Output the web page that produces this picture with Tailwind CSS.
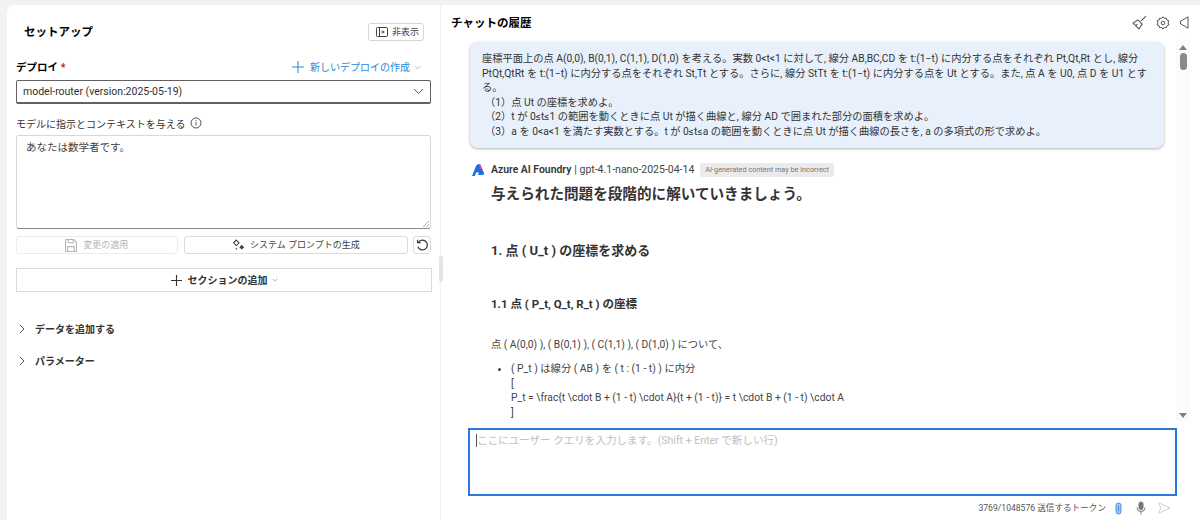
<!DOCTYPE html>
<html lang="ja">
<head>
  <meta charset="UTF-8">
  <title>セットアップ</title>
  <script src="https://cdn.jsdelivr.net/npm/@tailwindcss/browser@4"></script>
</head>
<body class="w-[1200px] h-[520px] overflow-hidden bg-[#f2f2f2] text-[#242424] font-['Roboto','Noto_Sans_CJK_JP',sans-serif]">
  <div class="flex h-[520px] pt-[5px] pl-[7px]">

    <!-- setup panel -->
    <aside class="relative w-[433px] shrink-0 bg-white rounded-tl-lg px-[9px]">
      <div class="flex items-center justify-between h-[18px] mt-[18px] pl-2 pr-[7px]">
        <h2 class="pt-[2px] text-[11.5px] font-bold text-black">セットアップ</h2>
        <button class="flex items-center gap-[4px] w-[56px] h-[18px] pl-[7px] border border-[#d6d6d6] rounded-[3px] text-[9px] text-[#424242]">
          <svg width="12" height="10" viewBox="0 0 12 10" fill="none" stroke="#424242"><rect x="0.5" y="0.5" width="11" height="9" rx="1"/><path d="M3.5 1v8M5.5 5h3M7 3.5v3"/></svg>
          <span class="pt-[1px]">非表示</span>
        </button>
      </div>

      <div class="flex items-center justify-between h-[16px] mt-[18px]">
        <label class="pt-[2px] text-[10.5px] font-bold text-black">デプロイ <span class="text-[#c50f1f]">*</span></label>
        <div class="flex items-center gap-[6px] pr-[10px] text-[#2b88d8] text-[10px]">
          <svg width="12" height="12" viewBox="0 0 12 12" stroke="#2b88d8" stroke-width="1"><path d="M6 0v12M0 6h12"/></svg>
          <span>新しいデプロイの作成</span>
          <svg class="-ml-[2px]" width="7" height="7" viewBox="0 0 8 8" fill="none" stroke="#8ab8e0"><path d="M1 2.5l3 3 3-3"/></svg>
        </div>
      </div>
      <div class="flex items-center justify-between h-[24px] mt-[5px] pl-[6px] pr-[6px] border border-[#616161] border-b-2 rounded-[2px] text-[10.5px]">
        <span class="text-[#303030]">model-router (version:2025-05-19)</span>
        <svg width="11" height="7" viewBox="0 0 11 7" fill="none" stroke="#555"><path d="M1 1l4.5 4.5L10 1"/></svg>
      </div>

      <div class="flex items-center gap-[5px] h-[16px] mt-[11px] text-[10px] text-[#333]">
        <span class="pt-[2px]">モデルに指示とコンテキストを与える</span>
        <svg width="12" height="12" viewBox="0 0 12 12" fill="none" stroke="#555"><circle cx="6" cy="6" r="5"/><path d="M6 5.2v3.2M6 3.2v1"/></svg>
      </div>
      <div class="relative h-[94px] mt-[4px] px-[9px] pt-[4px] border border-[#d8d8d8] border-b-[#8a8a8a] rounded-[3px] text-[10.5px] text-[#444]">
        あなたは数学者です。
        <svg class="absolute right-[1px] bottom-[1px]" width="6" height="6" viewBox="0 0 6 6" stroke="#888" stroke-width="0.7"><path d="M0 6L6 0M3 6l3-3"/></svg>
      </div>

      <div class="flex gap-[6px] h-[18px] mt-[7px] text-[9px]">
        <button class="flex items-center justify-center gap-[6px] w-[162px] border border-[#ececec] rounded-[3px] text-[#b5b5b5]">
          <svg width="12" height="13" viewBox="0 0 11 12" fill="none" stroke="#b5b5b5"><path d="M1 .5h7l2.5 2.5v8.500H.5V1z"/><path d="M3 .5v3h4.500v-3M2.500 11.500V7h6v4.500"/></svg>
          <span class="pt-[1px]">変更の適用</span>
        </button>
        <button class="flex items-center justify-center gap-[5px] w-[225px] border border-[#dcdcdc] rounded-[3px] text-[#424242]">
          <svg width="13" height="12" viewBox="0 0 12 11" fill="none" stroke="#424242"><path d="M4 1l2.500 2.500L4 6 1.500 3.500z"/><path d="M9 6l1.500 1.500L9 9 7.500 7.500z" fill="#424242"/><path d="M3.500 8.500l1 1"/></svg>
          <span class="pt-[1px]">システム プロンプトの生成</span>
        </button>
        <button class="flex items-center justify-center w-[18px] border border-[#dcdcdc] rounded-[3px] -ml-[1px]">
          <svg width="13" height="13" viewBox="0 0 12 12" fill="none" stroke="#333" stroke-width="1.100"><path d="M2.600 2.600A4.500 4.500 0 1 1 1.700 7"/><path d="M1.500 .8v2.600h2.800"/></svg>
        </button>
      </div>

      <button class="flex items-center justify-center gap-[6px] w-[416px] h-[24px] mt-[14px] border border-[#dcdcdc] text-[10px] font-bold text-[#333]">
        <svg width="11" height="11" viewBox="0 0 11 11" stroke="#333" stroke-width="1.100"><path d="M5.500 0v11M0 5.500h11"/></svg>
        <span>セクションの追加</span>
        <svg class="-ml-[2px]" width="6" height="6" viewBox="0 0 8 8" fill="none" stroke="#999"><path d="M1 2.500l3 3 3-3"/></svg>
      </button>

      <div class="flex items-center gap-[10px] h-[16px] mt-[29px] pl-[3px] text-[10px] font-bold text-[#333]">
        <svg width="6" height="10" viewBox="0 0 6 10" fill="none" stroke="#555"><path d="M1 1l4 4-4 4"/></svg>
        データを追加する
      </div>
      <div class="flex items-center gap-[10px] h-[16px] mt-[16px] pl-[3px] text-[10px] font-bold text-[#333]">
        <svg width="6" height="10" viewBox="0 0 6 10" fill="none" stroke="#555"><path d="M1 1l4 4-4 4"/></svg>
        パラメーター
      </div>

      <div class="absolute -right-[3px] top-[251px] w-[4px] h-[26px] bg-[#e4e4e4] rounded-sm z-10"></div>
    </aside>

    <!-- chat panel -->
    <main class="flex flex-col w-[759px] ml-[1px] shrink-0 bg-white">
      <div class="flex items-center justify-between h-[34px] pl-[10px] pr-[11px] pt-[1px]">
        <h2 class="pt-[2px] text-[11.500px] font-bold text-black">チャットの履歴</h2>
        <div class="flex items-center gap-[9px]">
          <svg width="15" height="15" viewBox="0 0 14 14" fill="none" stroke="#555"><path d="M13 1L8.500 5.500M5.500 4.500l4 4-3 4.500L1 7.500z"/><path d="M3.500 10l1.500-1.500"/></svg>
          <svg width="14" height="14" viewBox="0 0 14 14" fill="none" stroke="#555"><path d="M7 .8l1.300 1.600 2-.4.600 2 1.900.8-.7 2.200.7 2-1.900.8-.6 2-2-.4L7 13.200l-1.300-1.800-2 .4-.6-2-1.900-.8.700-2-.7-2.200 1.900-.8.600-2 2 .4z"/><circle cx="7" cy="7" r="1.800"/></svg>
          <svg class="ml-[1px]" width="9" height="13" viewBox="0 0 9 13" fill="none" stroke="#555"><path d="M8 .8v11.400L1 8H.5V5H1z"/></svg>
        </div>
      </div>

      <div class="flex h-[382px] min-h-0">
        <!-- messages -->
        <div class="w-[735px] overflow-hidden pt-[3px] pl-[29px]">
          <div class="w-[694px] h-[106px] pl-[12px] pt-[10px] bg-[#e8f1fb] rounded-lg shadow-[0_1px_3px_rgba(0,0,0,0.3)] text-[10.250px] leading-[14.600px] text-[#333] whitespace-nowrap">
            座標平面上の点 A(0,0), B(0,1), C(1,1), D(1,0) を考える。実数 0&lt;t&lt;1 に対して, 線分 AB,BC,CD を t:(1−t) に内分する点をそれぞれ Pt,Qt,Rt とし, 線分<br>
            PtQt,QtRt を t:(1−t) に内分する点をそれぞれ St,Tt とする。さらに, 線分 StTt を t:(1−t) に内分する点を Ut とする。また, 点 A を U0, 点 D を U1 とす<br>
            る。<br>
            <span class="pl-[3px]">（1）点 Ut の座標を求めよ。</span><br>
            <span class="pl-[3px]">（2）t が 0≤t≤1 の範囲を動くときに点 Ut が描く曲線と, 線分 AD で囲まれた部分の面積を求めよ。</span><br>
            <span class="pl-[3px]">（3）a を 0&lt;a&lt;1 を満たす実数とする。t が 0≤t≤a の範囲を動くときに点 Ut が描く曲線の長さを, a の多項式の形で求めよ。</span>
          </div>

          <div class="flex items-center h-[16px] mt-[14px] pl-[2px]">
            <svg width="12" height="13" viewBox="0 0 12 13"><path d="M0 12L4 2Q5 0 7 0H8L12 9Q12.500 11 10 11H6L7 8.500H4L3 12z" fill="#1d6fe0"/><path d="M6.500 0H8L11 6.500 8.500 5z" fill="#e0409c"/></svg>
            <span class="ml-[7px] text-[10.400px] font-semibold text-[#333]">Azure AI Foundry</span>
            <span class="ml-[3px] text-[10.500px] text-[#444]">| gpt-4.1-nano-2025-04-14</span>
            <span class="ml-[6px] px-[5px] h-[14px] leading-[14px] bg-[#ebebeb] rounded-[2px] text-[7.300px] text-[#777]">AI-generated content may be incorrect</span>
          </div>

          <div class="pl-[21px] text-[#333]">
            <h1 class="mt-[5px] h-[22px] text-[14.600px] leading-[22px] font-bold">与えられた問題を段階的に解いていきましょう。</h1>
            <h2 class="mt-[36px] h-[20px] text-[13px] leading-[20px] font-bold">1. 点 ( U_t ) の座標を求める</h2>
            <h3 class="mt-[35px] h-[16px] text-[11.500px] leading-[16px] font-bold">1.1 点 ( P_t, Q_t, R_t ) の座標</h3>
            <p class="mt-[25px] h-[16px] text-[10.250px] leading-[16px] text-[#444]">点 ( A(0,0) ), ( B(0,1) ), ( C(1,1) ), ( D(1,0) ) について、</p>
            <ul class="mt-[9px] ml-[20px] list-disc text-[10.300px] leading-[14.700px] text-[#444]">
              <li>( P_t ) は線分 ( AB ) を ( t : (1 - t) ) に内分<br>[<br>P_t = \frac{t \cdot B + (1 - t) \cdot A}{t + (1 - t)} = t \cdot B + (1 - t) \cdot A<br>]</li>
            </ul>
          </div>
        </div>

        <!-- scrollbar -->
        <div class="flex flex-col items-center justify-between w-[14px] h-[382px] pt-[6px] pb-[3px] bg-[#fbfbfb]">
          <div class="flex flex-col items-center gap-[3px]">
            <div class="w-0 h-0 border-x-[4px] border-x-transparent border-b-[5px] border-b-[#808080]"></div>
            <div class="w-[7px] h-[17px] bg-[#8a8a8a] rounded-full"></div>
          </div>
          <div class="w-0 h-0 border-x-[4px] border-x-transparent border-t-[5px] border-t-[#808080]"></div>
        </div>
      </div>

      <!-- input -->
      <div class="ml-[27px] w-[709px] h-[68px] mt-[7px] px-[6px] pt-[3px] border-2 border-[#2b78dc] text-[10.550px] text-[#c0c0c0]">
        <span class="border-l border-[#555]">ここにユーザー クエリを入力します。(Shift + Enter で新しい行)</span>
      </div>
      <div class="flex items-center justify-end h-[24px] w-[730px] text-[8.600px] text-[#555]">
        <span>3769/1048576 送信するトークン</span>
        <svg class="ml-[9px]" width="7" height="13" viewBox="0 0 7 13" fill="#a9c8ee" stroke="#2b78dc" stroke-width="0.800"><path d="M1 3.500a2.500 2.500 0 0 1 5 0v6a2.500 2.500 0 0 1-5 0z"/><path d="M3.500 3.500v6"/></svg>
        <svg class="ml-[14px]" width="10" height="14" viewBox="0 0 10 14" fill="none" stroke="#777"><rect x="3" y="1" width="4" height="7.500" rx="2" fill="#777"/><path d="M1 6.500a4 4 0 0 0 8 0M5 10.500v3"/></svg>
        <svg class="ml-[12px]" width="13" height="12" viewBox="0 0 13 12" fill="none" stroke="#cfcfcf"><path d="M.8 .8L12 6 .8 11.200 2.800 6z"/></svg>
      </div>
    </main>
  </div>
</body>
</html>
